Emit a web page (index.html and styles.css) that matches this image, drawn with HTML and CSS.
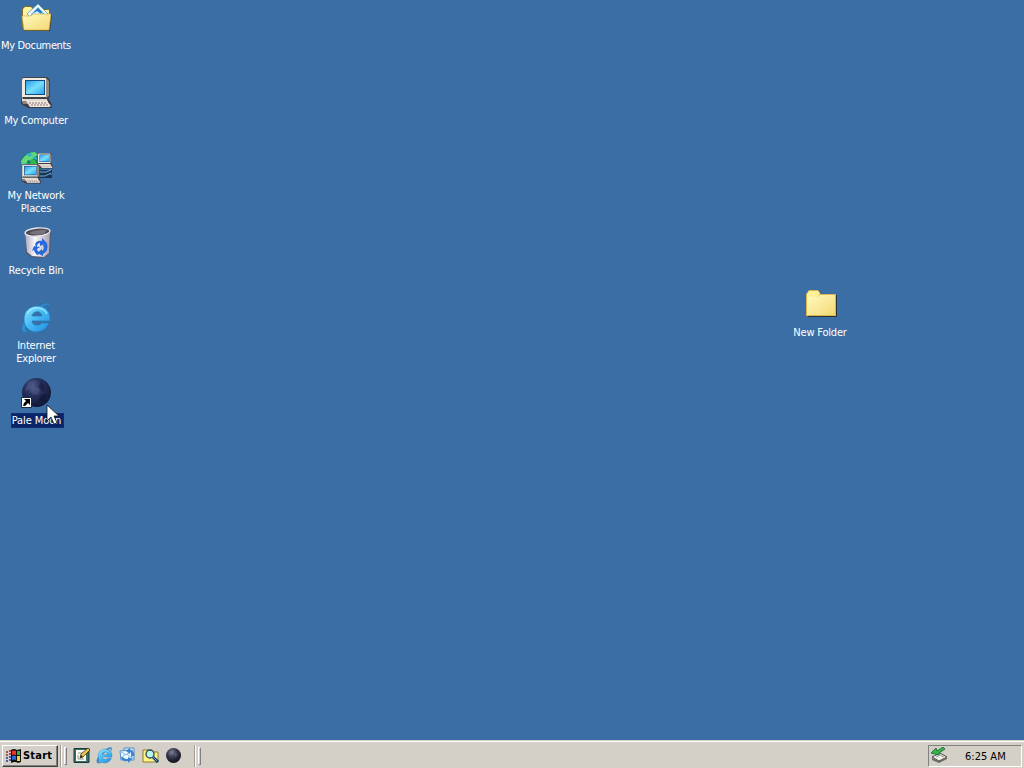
FILE: index.html
```html
<!DOCTYPE html>
<html lang="en">
<head>
<meta charset="utf-8">
<title>Desktop</title>
<link rel="stylesheet" href="styles.css">
</head>
<body>
<svg width="0" height="0" class="defs" aria-hidden="true">
  <defs>
    <linearGradient id="fold" x1="0" y1="0" x2="1" y2="1"><stop offset="0" stop-color="#fffbc2"/><stop offset="1" stop-color="#f3d873"/></linearGradient>
    <linearGradient id="screen" x1="0" y1="0" x2="1" y2="1"><stop offset="0" stop-color="#2b9cea"/><stop offset=".5" stop-color="#78dffb"/><stop offset="1" stop-color="#27a4ee"/></linearGradient>
    <linearGradient id="bin" x1="0" y1="0" x2="1" y2="0"><stop offset="0" stop-color="#aaa7bd"/><stop offset=".4" stop-color="#fbf8ff"/><stop offset="1" stop-color="#a9a0ad"/></linearGradient>
    <linearGradient id="ie" x1="0" y1="0" x2="1" y2="1"><stop offset="0" stop-color="#8be5ff"/><stop offset=".5" stop-color="#42b7f4"/><stop offset="1" stop-color="#238ae0"/></linearGradient>
    <radialGradient id="moon" cx=".4" cy=".3" r=".7"><stop offset="0" stop-color="#485384"/><stop offset=".5" stop-color="#252e59"/><stop offset="1" stop-color="#101735"/></radialGradient>
    <radialGradient id="darkmoon" cx=".4" cy=".3" r=".7"><stop offset="0" stop-color="#74758d"/><stop offset=".5" stop-color="#343548"/><stop offset="1" stop-color="#11121c"/></radialGradient>
    <symbol id="pc" viewBox="0 0 32 32">
      <path d="M3 20H28L32 28V31H8L1 27V22Z" fill="#3f3d45"/>
      <path d="M2 20H26L28 25H2Z" fill="#e2dacf"/><path d="M2 24H27V27H3Z" fill="#8d8481"/>
      <path d="M3 0H27L30 3V20L27 22H3L2 20V2Z" fill="#3d4148"/>
      <path d="M3 1H26V20H2V3Z" fill="#f1ebdf"/><path d="M26 1L29 4V19L26 21Z" fill="#938b80"/>
      <path d="M5 3H25V18H5Z" fill="#134a86"/><path d="M6 4H24V17H6Z" fill="url(#screen)"/>
      <path d="M6 24H27L31 29L29 30H10Z" fill="#f2e6df"/><path d="M9 26H27M11 28H29" stroke="#857674" stroke-dasharray="2 1"/>
    </symbol>
    <symbol id="explorer" viewBox="0 0 32 32">
      <path d="M27 9C32 1 29-1 21 3C11 8-1 23 2 29C4 32 11 29 15 26C5 31 3 29 8 20C13 12 22 4 27 3C29 3 29 5 27 9Z" fill="#318fd2" stroke="#246eab" stroke-width=".7"/>
      <path d="M30 19H12C12 23 18 25 22 21H29C26 28 21 30 15 30C8 29 4 24 4 17C4 9 10 4 17 4C26 4 31 10 30 19ZM12 14H22C21 10 18 9 16 10C14 10 12 12 12 14Z" fill="url(#ie)" fill-rule="evenodd" stroke="#2478b9" stroke-width=".7"/>
      <path d="M7 12Q11 5 18 6Q25 7 27 12" fill="none" stroke="#9df1ff" stroke-width="1.5" opacity=".75"/>
    </symbol>
  </defs>
</svg>

<main class="desktop">
  <div class="icons">
    <div class="shortcut">
      <svg class="icon" viewBox="0 0 32 32">
        <path d="M2 7L4 4H11L14 7H29V28H4L2 25Z" fill="#806f2d"/><path d="M3 7L5 5H11L13 8H29V25H3Z" fill="#fff2a0"/>
        <path d="M7 12L18 2L31 15L21 25Z" fill="#f7fdff" stroke="#72aaca"/><path d="M11 12L18 5L26 13L18 17Z" fill="#70bfe9"/><path d="M14 10L18 6L22 10L18 14Z" fill="#2874b9"/><path d="M13 12L17 9L21 12" fill="#d6f5ff"/>
        <path d="M2 15H9L12 12H32L30 29H4Z" fill="#3b3426"/><path d="M2 14H10L13 12H31L29 28H4Z" fill="url(#fold)" stroke="#d6b64c" stroke-width=".7"/>
      </svg>
      <span class="label documents">My Documents</span>
    </div>
    <div class="shortcut">
      <svg class="icon"><use href="#pc"/></svg>
      <span class="label computer">My Computer</span>
    </div>
    <div class="shortcut">
      <svg class="icon network-icon" viewBox="0 0 32 32">
        <circle cx="12" cy="11.5" r="11.5" fill="#127e70"/><path d="M1 9Q6 0 15 0L18 3L14 5L12 9L8 8L5 14L2 15Z" fill="#65d978"/><path d="M6 2L10 1L13 3L9 5ZM2 12L8 11L7 16L3 16ZM12 6L16 4L17 8Z" fill="#36aed1"/><path d="M11 7L15 8L17 12L13 15L10 12Z" fill="#32b848"/>
        <path d="M15 18H32V21L29 23H32V26H17Z" fill="#193454"/><path d="M18 20H26L31 18M18 24H25L31 21" stroke="#70acd3" fill="none"/>
        <svg x="17" y="0" width="16" height="18"><use href="#pc"/></svg><svg x="1" y="12" width="20" height="20"><use href="#pc"/></svg>
      </svg>
      <span class="label network">My Network<br>Places</span>
    </div>
    <div class="shortcut">
      <svg class="icon" viewBox="0 0 32 32">
        <path d="M5 4L31 4L30 26L24 31L11 30L6 26Z" fill="#555768"/><path d="M5 5L30 5L29 26L24 30L12 29L7 25Z" fill="url(#bin)"/>
        <ellipse cx="17.5" cy="5" rx="12.5" ry="4" transform="rotate(-5 17.5 5)" fill="#4c4951" stroke="#e7e3ec" stroke-width="1.3"/><path d="M9 6Q17 2 27 3L24 7Q15 9 9 6Z" fill="#77737c"/>
        <path d="M15 18Q16 13 22 14V11L27 16L20 19V16Q17 16 17 20ZM23 18L27 16Q29 24 23 27V29L17 26L22 22V24Q25 22 23 18ZM14 19L20 20L17 22Q18 26 21 26L17 28Q14 25 14 23L12 24Z" fill="#2769d9"/>
      </svg>
      <span class="label recycle">Recycle Bin</span>
    </div>
    <div class="shortcut">
      <svg class="icon"><use href="#explorer"/></svg>
      <span class="label internet">Internet<br>Explorer</span>
    </div>
    <div class="shortcut selected">
      <svg class="icon" viewBox="0 0 32 32">
        <circle cx="16.5" cy="15.5" r="14.5" fill="url(#moon)"/><path d="M8 5L16 3L14 10L20 12L18 18L12 17L10 12L5 14Z" fill="#5e6692" opacity=".35"/><path d="M21 4L25 10L23 15L18 10ZM21 18L27 16L24 24L18 25Z" fill="#0b102c" opacity=".4"/>
        <path d="M1.5 20.5H11.5V30.5H1.5Z" fill="#fff" stroke="#172a45"/><path d="M4 22H10V28L8 26L5 29H3L4 26L6 24Z" fill="#000"/>
      </svg>
      <span class="label moon">Pale Moon</span>
      <svg class="cursor" viewBox="0 0 13 21"><path d="M1 1V17L5 13L8 20L11 19L8 12H13Z" fill="#fff" stroke="#111" stroke-width=".8"/></svg>
    </div>
  </div>
  <div class="shortcut new-folder">
    <svg class="icon" viewBox="0 0 32 32">
      <path d="M2 5L5 2H13L17 5H31L32 7V28H3Z" fill="#253340"/><path d="M1 5L4 1H13L16 5H31V27H1Z" fill="#dcb74d"/><path d="M2 5L4 2H13L15 5L12 8H2Z" fill="#fff19b"/><path d="M2 8H12L15 6H30V26H2Z" fill="url(#fold)"/>
    </svg>
    <span class="label folder">New Folder</span>
  </div>
</main>

<footer class="taskbar">
  <button class="start">
    <svg class="flag" viewBox="0 0 17 16">
      <path d="M6 2Q9 0 12 2L16 1V14L13 15Q10 13 6 15Z" fill="#111"/><path d="M7 3Q10 2 11 3V7Q9 6 7 7Z" fill="#ef3629"/><path d="M12 3L15 3V7H12Z" fill="#42a743"/><path d="M7 8Q10 7 11 8V12Q9 11 7 12Z" fill="#3168d8"/><path d="M12 8H15V13H12Z" fill="#f2d235"/>
      <path d="M1 4H3M4 3H6M1 7H3M4 6H6" stroke="#a32830" stroke-width="1.5"/><path d="M1 10H3M4 9H6M1 13H3M4 12H6" stroke="#203b99" stroke-width="1.5"/>
    </svg><span>Start</span>
  </button>
  <i class="separator first"></i><i class="grip"></i>
  <nav class="quick">
    <svg viewBox="0 0 17 17"><path d="M1 1.5H16V15.5H1Z" fill="#367065" stroke="#18383c"/><path d="M3 3H13V14H3Z" fill="#fffdf1"/><path d="M5 6H9M5 8V12H11" fill="none" stroke="#8a948c"/><path d="M7 11L8 7L15 1L17 3L10 10Z" fill="#ebc349" stroke="#3b341f" stroke-width=".8"/><path d="M7 11L8 8L10 10Z" fill="#222"/></svg>
    <svg><use href="#explorer"/></svg>
    <svg viewBox="0 0 17 17"><path d="M5 1H15V13H5Z" fill="#d2eaff" stroke="#568cc4"/><path d="M6 3L10 6L14 3" fill="none" stroke="#72a9d9"/><path d="M1 4L12 3L13 12L2 13Z" fill="#edf8ff" stroke="#4d8ecb"/><path d="M1 4L7 8L12 4M2 12L6 7M13 11L8 7" fill="none" stroke="#81b7e3"/><path d="M2 10Q3 15 9 14V16L13 12L9 10V12Q5 12 4 10ZM15 9Q16 4 11 3V1L7 4L11 7V5Q13 5 13 9Z" fill="#3684cd"/></svg>
    <svg viewBox="0 0 17 17"><path d="M1 3H7L9 5H16V15H1Z" fill="#fff58a" stroke="#907c22"/><circle cx="8" cy="7" r="4" fill="#b9f4f4" stroke="#31454a" stroke-width="1.3"/><path d="M11 10L16 15" stroke="#173b70" stroke-width="3"/><path d="M11 10L15 14" stroke="#55b1df"/></svg>
    <svg viewBox="0 0 17 17"><circle cx="8.5" cy="8.5" r="7.5" fill="url(#darkmoon)"/><path d="M5 4L9 3L8 7L4 8ZM10 6L13 8L10 10Z" fill="#8888a0" opacity=".35"/></svg>
  </nav>
  <i class="separator second"></i><i class="grip"></i>
  <div class="tray">
    <svg viewBox="0 0 17 17"><path d="M1 10L9 6L16 10L8 14Z" fill="#eeeee8" stroke="#4a4a45"/><path d="M1 11V13L8 16L16 12V10L8 14Z" fill="#696b63"/><path d="M5 10L9 8L13 10" fill="none" stroke="#999"/><path d="M12 0L6 4L5 1L0 6L8 8V6L14 2Z" fill="#36b64a" stroke="#11662a" stroke-width=".8"/></svg>
    <time>6:25 AM</time>
  </div>
</footer>
</body>
</html>
```

FILE: styles.css
```css
* { box-sizing: border-box; }
body { margin: 0; width: 1024px; height: 768px; overflow: hidden; display: flex; flex-direction: column; background: #3a6ea5; font: 11px/13px Tahoma, "DejaVu Sans Condensed", "DejaVu Sans", sans-serif; font-stretch: condensed; color: #fff; }
svg { display: block; flex-shrink: 0; }
.defs { position: absolute; }
.desktop { height: 740px; position: relative; }
.icons { display: flex; flex-direction: column; width: 72px; }
.shortcut { width: 72px; height: 75px; padding-top: 2px; display: flex; flex-direction: column; align-items: center; position: relative; }
.icon { width: 32px; height: 32px; margin-bottom: 4px; }
.network-icon { overflow: visible; }
.label { text-align: center; white-space: nowrap; padding: 1px 1px 0; }
.documents { letter-spacing: -.35px; }
.computer { letter-spacing: -.3px; }
.network, .recycle, .internet, .folder { letter-spacing: -.2px; }
.moon { letter-spacing: -.1px; }
.selected .label { background: #0a246a; height: 15px; width: 53px; margin-left: 2px; padding-left: 0; outline: 1px dotted #183968; outline-offset: -1px; }
.cursor { position: absolute; left: 46px; top: 29px; width: 13px; height: 21px; }
.new-folder { position: absolute; left: 784px; top: 287px; }
.new-folder .icon { margin-left: 1px; }
.taskbar { height: 28px; display: flex; align-items: center; background: #d4d0c8; border-top: 1px solid #d4d0c8; box-shadow: inset 0 1px #fff; color: #000; padding: 2px 2px 0; }
.start { width: 56px; height: 22px; padding: 0 2px; display: flex; align-items: center; gap: 1px; border: 1px solid; border-color: #fff #404040 #404040 #fff; box-shadow: inset -1px -1px #808080; background: #d4d0c8; font: bold 11px/13px Tahoma, "DejaVu Sans Condensed", "DejaVu Sans", sans-serif; font-stretch: condensed; letter-spacing: .2px; white-space: nowrap; }
.flag { width: 17px; height: 16px; }
.separator { width: 2px; height: 22px; border-left: 1px solid #a09c96; border-right: 1px solid #fff; }
.first { margin-left: 2px; }
.grip { width: 3px; height: 18px; margin-left: 2px; border: 1px solid; border-color: #fff #808080 #808080 #fff; }
.quick { display: flex; gap: 6px; margin-left: 6px; }
.quick svg, .tray svg { width: 17px; height: 17px; }
.second { margin-left: 12px; }
.tray { width: 94px; height: 22px; margin-left: auto; display: flex; align-items: center; padding-left: 2px; border: 1px solid; border-color: #808080 #fff #fff #808080; }
.tray svg { margin-bottom: 1px; }
.tray time { margin: 2px 0 0 17px; letter-spacing: 0; white-space: nowrap; }
```
